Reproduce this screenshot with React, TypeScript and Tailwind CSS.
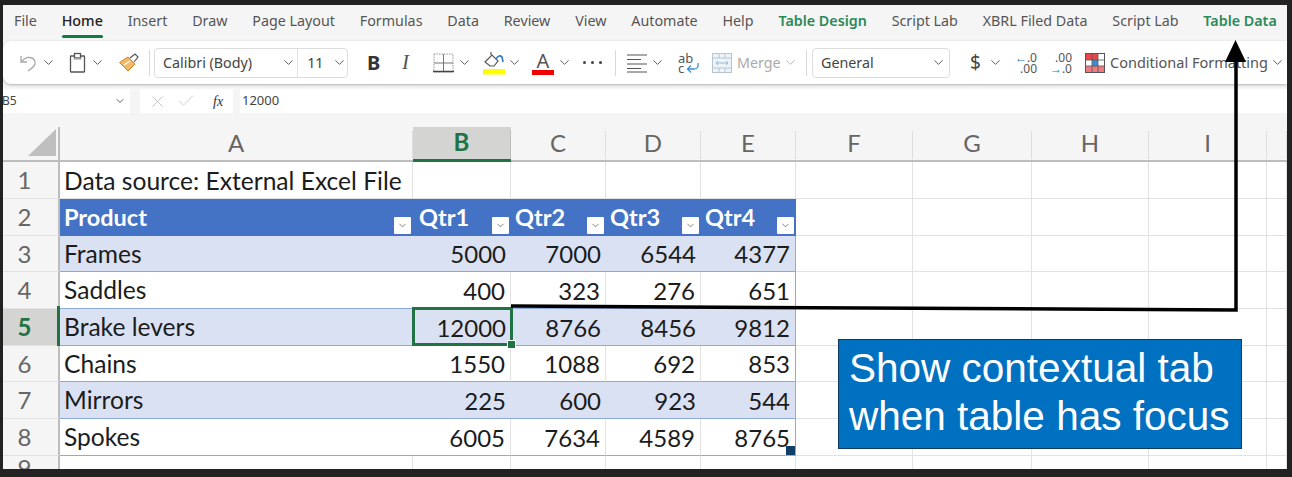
import React from "react";
import { ChevronDown, X, Check } from "lucide-react";

const ui = "font-['Noto_Sans','Open_Sans',sans-serif]";
const cellFont = "font-['Lato','Noto_Sans',sans-serif]";

function Chev({ className = "", color = "#444" }: { className?: string; color?: string }) {
  return <ChevronDown size={15} strokeWidth={1.4} color={color} className={`shrink-0 ${className}`} />;
}

const tabs: [string, boolean][] = [
  ["File", false], ["Home", false], ["Insert", false], ["Draw", false], ["Page Layout", false], ["Formulas", false],
  ["Data", false], ["Review", false], ["View", false], ["Automate", false], ["Help", false], ["Table Design", true],
  ["Script Lab", false], ["XBRL Filed Data", false], ["Script Lab", false], ["Table Data", true],
];

function Tabs() {
  return (
    <div className="flex h-[36px] shrink-0 items-start gap-[24.800px] pl-[11px] pt-[6px] text-[14.300px] leading-[20px] text-[#555]">
      {tabs.map(([t, green], i) =>
        t === "Home" ? (
          <div key={i} className="flex flex-col items-center font-medium text-[#222]">
            <span>{t}</span>
            <div className="mt-[4px] h-[3px] w-full rounded-sm bg-[#107c41]" />
          </div>
        ) : (
          <span key={i} className={green ? "font-semibold text-[#2b8a57]" : ""}>{t}</span>
        ),
      )}
    </div>
  );
}

function Sep({ className = "" }: { className?: string }) {
  return <div className={`h-[26px] w-[1px] shrink-0 bg-[#d9d9d9] ${className}`} />;
}

function Toolbar() {
  return (
    <div className="relative z-10 flex h-[43px] shrink-0 items-center rounded-l-lg bg-white text-[14.300px] shadow-[0_1px_3px_rgba(0,0,0,0.28)]">
      {/* undo */}
      <svg width="20" height="20" viewBox="0 0 20 20" fill="none" stroke="#a6a6a6" strokeWidth="1.3" className="ml-[16px] shrink-0">
        <path d="M2 3v6h6" /><path d="M2.500 9 Q6 4 11 4.500 Q17 6 16 11 Q15 14 9 18" />
      </svg>
      <Chev className="ml-[2px]" />
      {/* paste */}
      <svg width="20" height="22" viewBox="0 0 20 22" fill="none" stroke="#555" strokeWidth="1.3" className="ml-[12px] shrink-0">
        <rect x="2.500" y="4" width="14" height="16" rx="0.500" /><rect x="6.500" y="1.500" width="6" height="4.500" fill="#fff" /><path d="M5.500 7h8" stroke="#aaa" />
      </svg>
      <Chev className="ml-[2px]" />
      {/* format painter */}
      <svg width="22" height="22" viewBox="0 0 22 22" fill="none" className="ml-[13px] shrink-0">
        <path d="M1.500 10.500 10 5l7 7-7 7z" fill="#f4b869" stroke="#d67f1e" strokeWidth="1" />
        <path d="M6 13l6-4" stroke="#fff" strokeWidth="1.200" />
        <path d="M12 6l5-4 3 3-4 5" fill="#fff" stroke="#555" strokeWidth="1.200" />
      </svg>
      <Sep className="ml-[9px]" />
      {/* font */}
      <div className="ml-[4px] flex h-[30px] w-[194px] shrink-0 items-center rounded-[4px] border border-[#dcdcdc] text-[#444]">
        <span className="ml-[8px] w-[119px]">Calibri (Body)</span>
        <Chev />
        <div className="ml-[1px] h-full w-[1px] bg-[#e2e2e2]" />
        <span className="ml-[9px] w-[23px]">11</span>
        <Chev className="ml-[2px]" />
      </div>
      <span className="ml-[19px] w-[14px] text-[20px] font-bold text-[#333]">B</span>
      <span className="ml-[21px] w-[12px] font-['Liberation_Serif',serif] text-[21px] italic text-[#555]">I</span>
      {/* borders */}
      <svg width="21" height="20" viewBox="0 0 21 20" fill="none" className="ml-[19px] shrink-0">
        <path d="M1 1h19v18H1z" stroke="#999" strokeDasharray="1.500 1" />
        <path d="M10.500 1v18M1 10h19" stroke="#777" />
        <path d="M0 18.500h21" stroke="#444" strokeWidth="1.500" />
      </svg>
      <Chev className="ml-[3px]" />
      {/* fill */}
      <svg width="24" height="26" viewBox="0 0 24 26" fill="none" className="ml-[10px] shrink-0">
        <path d="M3 12 10 5l6 6-4 5H8z" stroke="#555" strokeWidth="1.200" />
        <path d="M9 5V2" stroke="#555" strokeWidth="1.200" />
        <path d="M14 9q3-5 6-2l1 5" stroke="#2b79c2" strokeWidth="1.600" />
        <rect x="1" y="19" width="22" height="5.500" fill="#ffff00" />
      </svg>
      <Chev className="ml-[1px]" />
      {/* font color */}
      <div className="ml-[10px] flex h-[26px] w-[22px] shrink-0 flex-col items-center">
        <span className="h-[19px] text-[20px] leading-[22px] text-[#555]">A</span>
        <div className="mt-[1px] h-[5px] w-full bg-[#f00000]" />
      </div>
      <Chev className="ml-[3px]" />
      <span className="ml-[11px] flex w-[19px] shrink-0 justify-between">
        <i className="h-[3px] w-[3px] rounded-full bg-[#444]" />
        <i className="h-[3px] w-[3px] rounded-full bg-[#444]" />
        <i className="h-[3px] w-[3px] rounded-full bg-[#444]" />
      </span>
      <Sep className="ml-[13px]" />
      {/* align */}
      <svg width="20" height="20" viewBox="0 0 20 20" stroke="#555" strokeWidth="1.200" className="ml-[11px] shrink-0">
        <path d="M0 2h20M0 6.500h14M0 11h20M0 15.500h14M0 19h20" />
      </svg>
      <Chev className="ml-[3px]" />
      {/* wrap */}
      <div className="relative ml-[13px] h-[24px] w-[20px] shrink-0 text-[#555]">
        <span className="absolute left-0 top-[-1px] text-[13px] leading-[16px]">ab</span>
        <span className="absolute left-0 top-[9px] text-[13px] leading-[16px]">c</span>
        <svg width="14" height="12" viewBox="0 0 14 12" fill="none" stroke="#3d8fd1" strokeWidth="1.300" className="absolute left-[8px] top-[11px]">
          <path d="M12 1q1 6-4 6H2M5 3.500 1.500 7 5 10.500" />
        </svg>
      </div>
      {/* merge */}
      <svg width="20" height="20" viewBox="0 0 20 20" fill="none" className="ml-[14px] shrink-0">
        <rect x="0.500" y="0.500" width="19" height="19" stroke="#b7c6d3" fill="#eef3f7" />
        <path d="M0 5h20M0 15h20M7 0v5M13 0v5M7 15v5M13 15v5" stroke="#b7c6d3" />
        <path d="M4 10h12M6 8l-2 2 2 2M14 8l2 2-2 2" stroke="#8db9dc" />
      </svg>
      <span className="ml-[5px] w-[43px] text-[#aaa]">Merge</span>
      <Chev className="ml-[3px]" color="#aaa" />
      <Sep className="ml-[8px]" />
      {/* general */}
      <div className="ml-[5px] flex h-[30px] w-[138px] shrink-0 items-center justify-between rounded-[4px] border border-[#dcdcdc] pl-[8px] pr-[3px] text-[#444]">
        <span>General</span>
        <Chev />
      </div>
      <span className="ml-[20px] w-[10px] text-[19px] text-[#444]">$</span>
      <Chev className="ml-[8px]" />
      {/* decimals */}
      <div className="ml-[13px] flex w-[21px] shrink-0 flex-col items-end text-[12px] leading-[11px] text-[#555]">
        <span className="flex items-center"><b className="font-normal text-[#2b79c2]">←</b>.0</span>
        <span>.00</span>
      </div>
      <div className="ml-[14px] flex w-[21px] shrink-0 flex-col items-end text-[12px] leading-[11px] text-[#555]">
        <span>.00</span>
        <span className="flex items-center"><b className="font-normal text-[#2b79c2]">→</b>.0</span>
      </div>
      {/* conditional formatting */}
      <svg width="20" height="20" viewBox="0 0 20 20" className="ml-[13px] shrink-0">
        <rect x="0.500" y="0.500" width="19" height="19" fill="#fff" stroke="#555" />
        <rect x="1" y="1" width="6" height="6" fill="#e8474c" />
        <rect x="7" y="1" width="6" height="6" fill="#e8474c" />
        <rect x="7" y="7" width="6" height="6" fill="#3d8fd1" />
        <rect x="7" y="13" width="12" height="6" fill="#ef7b7f" />
        <rect x="1" y="13" width="6" height="6" fill="#ef7b7f" />
        <path d="M7 0v20M13 0v20M0 7h20M0 13h20" stroke="#555" strokeWidth="0.800" />
      </svg>
      <span className="ml-[5px] whitespace-nowrap text-[14.500px] text-[#555]">Conditional Formatting</span>
      <Chev className="ml-[2px]" />
    </div>
  );
}

function FormulaBar() {
  return (
    <div className="mt-[5px] flex h-[24px] shrink-0 gap-[7px] text-[12.500px] text-[#444]">
      <div className="flex w-[127px] items-center justify-between overflow-hidden bg-white pr-[4px]">
        <span className="-ml-[1px] text-[12px]">B5</span>
        <ChevronDown size={12} strokeWidth={2} color="#666" />
      </div>
      <div className="ml-[3px] flex w-[93px] items-center bg-white pl-[8px]">
        <X size={19} strokeWidth={1} color="#b5b5b5" />
        <Check size={20} strokeWidth={1} color="#c4c4c4" className="ml-[9px]" />
        <span className="ml-[17px] font-['Liberation_Serif',serif] text-[14px] italic text-[#333]">fx</span>
      </div>
      <div className="flex flex-1 items-center bg-white pl-[2px] text-[13px]">12000</div>
    </div>
  );
}

const columns = ["A", "B", "C", "D", "E", "F", "G", "H", "I", ""];

const table: { name: string; q: number[] }[] = [
  { name: "Frames", q: [5000, 7000, 6544, 4377] },
  { name: "Saddles", q: [400, 323, 276, 651] },
  { name: "Brake levers", q: [12000, 8766, 8456, 9812] },
  { name: "Chains", q: [1550, 1088, 692, 853] },
  { name: "Mirrors", q: [225, 600, 923, 544] },
  { name: "Spokes", q: [6005, 7634, 4589, 8765] },
];

const EMPTY = "border-b border-r border-[#e2e2e2] bg-white";
const gridCells = [0, 1, 2, 3, 4];

function RowHead({ n, active = false }: { n: number; active?: boolean }) {
  return (
    <div
      className={`relative flex items-center justify-center border-b border-r-2 border-b-[#e2e2e2] border-r-[#bdbdbd] pr-[12px] text-[24px] ${
        active ? "bg-[#d4d4d2] font-bold text-[#217346]" : "bg-[#f5f5f5] text-[#666]"
      }`}
    >
      <span className={`${cellFont} leading-none`}>{n}</span>
      {active && <div className="absolute -bottom-[1px] -right-[2px] -top-[3px] w-[3px] bg-[#217346]" />}
    </div>
  );
}

function Filter() {
  return (
    <div className="absolute bottom-[2px] right-[2px] flex h-[17px] w-[17px] items-center justify-center rounded-[1px] bg-white">
      <ChevronDown size={11} strokeWidth={1.600} color="#555" />
    </div>
  );
}

function Sheet() {
  const trailing = (r: number) =>
    gridCells.map((c) => <div key={`${r}-${c}`} className={EMPTY} />);
  const alt = (i: number) => (i % 2 === 0 ? "bg-[#d9e1f2]" : "bg-white");

  return (
    <div
      className={`grid flex-1 grid-cols-[57px_353px_98px_95px_95px_95px_117px_119px_117px_118px_20px] grid-rows-[35px_37px_37px_36px_37px_37px_36px_37px_37px_1fr] ${cellFont} mt-[14px] text-[24.600px] leading-none text-[#1c1c1c]`}
    >
      {/* column headers */}
      <div className="relative border-b-2 border-r-2 border-[#bdbdbd] bg-[#f5f5f5]">
        <svg width="30" height="30" viewBox="0 0 30 30" className="absolute left-[25px] top-[0px]">
          <path d="M28 2v27H0z" fill="#bfbfbf" />
        </svg>
      </div>
      {columns.map((c, i) => (
        <div
          key={i}
          className={`flex items-center justify-center border-b-2 pb-[2px] text-[24px] ${
            c === "B"
              ? "border-b-[3px] border-b-[#217346] bg-[#d4d4d2] font-bold text-[#217346]"
              : "border-b-[#bdbdbd] text-[#666]"
          }`}
        >
          <span className="flex-1 text-center">{c}</span>
          <span className={`-mb-[1px] h-[28px] w-[1px] self-end ${c === "B" ? "bg-[#bdbdbd]" : "bg-[#dedede]"}`} />
        </div>
      ))}

      {/* row 1 */}
      <RowHead n={1} />
      <div className="flex items-center whitespace-nowrap border-b border-r border-[#e2e2e2] bg-white pl-[4px] pt-[3px]">Data source: External Excel File</div>
      <div className={EMPTY} />
      <div className={EMPTY} />
      <div className={EMPTY} />
      <div className={EMPTY} />
      {trailing(1)}

      {/* row 2 */}
      <RowHead n={2} />
      <div className="relative flex items-center bg-[#4472c4] pl-[4px] text-[23.500px] font-bold text-white">
        Product
        <Filter />
      </div>
      {["Qtr1", "Qtr2", "Qtr3", "Qtr4"].map((q, j) => (
        <div key={q} className={`relative flex items-center bg-[#4472c4] text-[23.500px] font-bold text-white ${j === 0 ? "pl-[6px]" : "pl-[4px]"}`}>
          {q}
          <Filter />
        </div>
      ))}
      {trailing(2)}

      {/* data rows */}
      {table.map((row, i) => (
        <React.Fragment key={row.name}>
          <RowHead n={i + 3} active={i === 2} />
          <div className={`flex items-center border-b border-[#8ea9db] pl-[4px] pt-[1px] ${alt(i)}`}>{row.name}</div>
          {row.q.map((v, j) => (
            <div
              key={j}
              className={`relative flex items-center justify-end border-b border-[#8ea9db] pr-[5px] pt-[1px] text-[24px] ${alt(i)} ${
                j === 3 ? "border-r" : i % 2 ? "border-r border-r-[#e2e2e2]" : ""
              } ${i === 2 && j === 0 ? "z-10" : ""}`}
            >
              {v}
              {i === 2 && j === 0 && (
                <div className="absolute -bottom-[1px] -left-[1px] -right-[2px] -top-[2px] border-[3px] border-[#217346]">
                  <div className="absolute -bottom-[6px] -right-[6px] h-[9px] w-[9px] border border-white bg-[#217346]" />
                </div>
              )}
              {i === 5 && j === 3 && <div className="absolute bottom-0 right-0 h-[9px] w-[9px] bg-[#0f3f66]" />}
            </div>
          ))}
          {trailing(i + 3)}
        </React.Fragment>
      ))}

      {/* row 9 */}
      <RowHead n={9} />
      <div className="border-r border-[#e2e2e2] bg-white" />
      <div className="border-r border-[#e2e2e2] bg-white" />
      <div className="border-r border-[#e2e2e2] bg-white" />
      <div className="border-r border-[#e2e2e2] bg-white" />
      <div className="border-r border-[#e2e2e2] bg-white" />
      {gridCells.map((c) => <div key={c} className="border-r border-[#e2e2e2] bg-white" />)}
    </div>
  );
}

export default function App() {
  return (
    <div className={`relative h-[477px] w-[1292px] overflow-hidden bg-[#222222] pb-[8px] pl-[3px] pr-[5px] pt-[5px] ${ui}`}>
      <div className="flex h-full flex-col overflow-hidden bg-[#f5f5f5]">
        <Tabs />
        <Toolbar />
        <FormulaBar />
        <Sheet />
      </div>

      {/* annotation arrow */}
      <svg width="1292" height="477" viewBox="0 0 1292 477" fill="none" className="pointer-events-none absolute left-0 top-0 z-20">
        <path d="M511 306 L1236 310 L1236 60" stroke="#000" strokeWidth="3.500" />
        <path d="M1235.500 40 L1246 62 H1225 Z" fill="#000" />
      </svg>

      {/* callout */}
      <div className="absolute left-[838px] top-[339px] z-30 h-[110px] w-[404px] border border-[#123a5e] bg-[#0070c0] pl-[10px] pt-[4px] font-['Liberation_Sans',Arial,sans-serif] text-[40.500px] leading-[48px] text-white">
        <div className="whitespace-nowrap">Show contextual tab</div>
        <div className="whitespace-nowrap">when table has focus</div>
      </div>
    </div>
  );
}
